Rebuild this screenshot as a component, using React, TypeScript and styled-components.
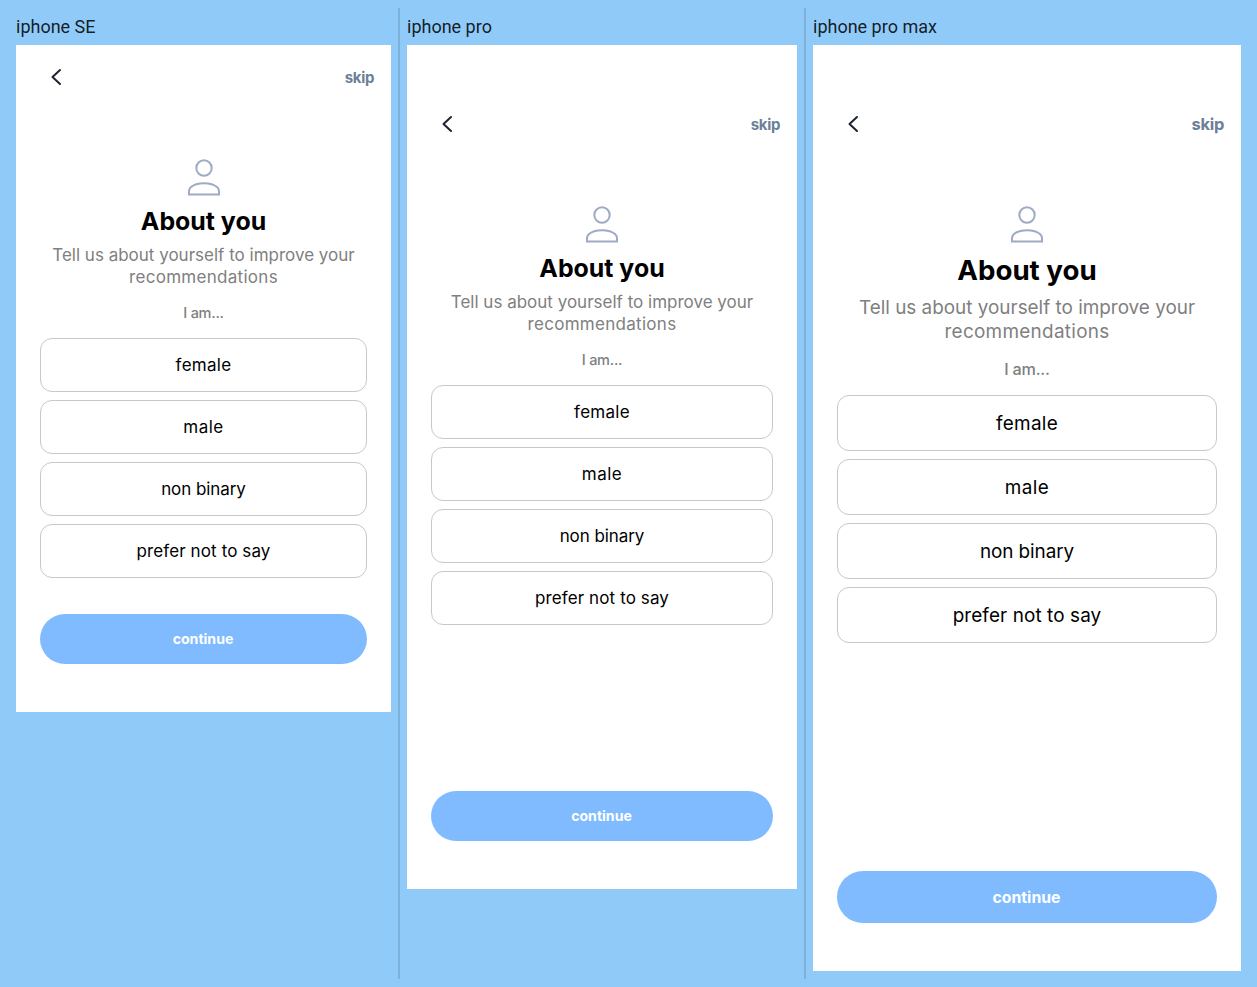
import React from "react";
import styled, { createGlobalStyle, ThemeProvider } from "styled-components";

const GlobalStyle = createGlobalStyle`
  * { box-sizing: border-box; }
  body {
    margin: 0;
    background: #90caf9;
    font-family: Inter, "Liberation Sans", sans-serif;
  }
`;

const Board = styled.main`
  display: flex;
  height: 987px;
  padding: 8px 0 8px 9px;
`;

const Column = styled.section`
  display: flex;
  flex-direction: column;
  flex: none;
  padding: 0 7px;

  & + & {
    border-left: 2px solid rgba(0, 0, 0, 0.12);
  }
`;

const DeviceName = styled.h2`
  margin: 0;
  height: 37px;
  font: 400 18px/37px Roboto, sans-serif;
  color: rgba(0, 0, 0, 0.87);
`;

const Screen = styled.div`
  display: flex;
  flex-direction: column;
  width: ${(p) => p.theme.width}px;
  height: ${(p) => p.theme.height}px;
  padding-top: ${(p) => p.theme.safeTop}px;
  background: #fff;
`;

const Header = styled.header`
  display: flex;
  align-items: center;
  justify-content: space-between;
  height: 64px;
  padding: 0 17px 0 34px;
`;

const BackButton = styled.button`
  display: flex;
  padding: 0;
  border: 0;
  background: none;
`;

const SkipButton = styled.button`
  padding: ${(p) => p.theme.skipTop}px 0 0;
  border: 0;
  background: none;
  color: #6b7f99;
  font: 650 ${(p) => p.theme.skip}px/24px Inter, sans-serif;
  letter-spacing: -0.25px;
  margin-right: -0.25px;
`;

const Body = styled.div`
  display: flex;
  flex: 1;
  flex-direction: column;
  align-items: center;
  padding: 48px 24px;
  text-align: center;
`;

const Title = styled.h1`
  margin: 7px 0 6px;
  font-size: ${(p) => p.theme.title}px;
  line-height: ${(p) => p.theme.titleLine}px;
  font-weight: 700;
  color: #000;
`;

const Lead = styled.p`
  margin: ${(p) => p.theme.nudge}px 0 0;
  font-size: ${(p) => p.theme.text}px;
  line-height: ${(p) => p.theme.textLine}px;
  color: #808080;
`;

const LeadEnd = styled.span`
  display: block;
  letter-spacing: 0.29px;
`;

const Prompt = styled.p`
  margin: ${(p) => p.theme.promptGap - p.theme.nudge}px 0 ${(p) => p.theme.promptGap}px;
  font-size: ${(p) => p.theme.prompt}px;
  line-height: ${(p) => p.theme.promptLine}px;
  font-weight: 450;
  letter-spacing: -0.25px;
  color: #808080;
`;

const Options = styled.div`
  display: flex;
  flex-direction: column;
  gap: 8px;
  width: 100%;
`;

const Option = styled.button<{ $tracking: number }>`
  height: ${(p) => p.theme.option}px;
  padding: ${(p) => p.theme.nudge * 2}px 0 0;
  border: 1px solid #c8c8c8;
  border-radius: 12px;
  background: #fff;
  color: #000;
  font: 400 ${(p) => p.theme.text}px/24px Inter, sans-serif;
  letter-spacing: ${(p) => p.$tracking}px;
`;

const ContinueButton = styled.button`
  width: 100%;
  height: ${(p) => p.theme.action}px;
  margin-top: auto;
  padding: ${(p) => p.theme.nudge * 2}px 1px 0 0;
  border: 0;
  border-radius: 26px;
  background: #80bbff;
  color: #fff;
  font: 700 ${(p) => p.theme.actionText}px/20px Inter, sans-serif;
`;

const regular = {
  skip: 15, skipTop: 1, title: 24.9, titleLine: 34, text: 17, textLine: 22, nudge: 0,
  prompt: 14.5, promptLine: 20, promptGap: 15, option: 54, action: 50, actionText: 14.1,
};

const large = {
  skip: 16.5, skipTop: 0, title: 27.7, titleLine: 38, text: 18.9, textLine: 24, nudge: 1,
  prompt: 16.2, promptLine: 20, promptGap: 16, option: 56, action: 52, actionText: 15.8,
};

const devices = [
  { name: "iphone SE", width: 375, height: 667, safeTop: 0, ...regular },
  { name: "iphone pro", width: 390, height: 844, safeTop: 47, ...regular },
  { name: "iphone pro max", width: 428, height: 926, safeTop: 47, ...large },
];

const options = [
  { label: "female", tracking: 0.28 },
  { label: "male", tracking: 0.45 },
  { label: "non binary", tracking: -0.07 },
  { label: "prefer not to say", tracking: 0.11 },
];

const ChevronIcon = () => (
  <svg width="12" height="20" viewBox="0 0 12 20" fill="none" stroke="#1f2433" strokeWidth="2" strokeLinecap="round" strokeLinejoin="round">
    <path d="M10 3 2.500 10l7.500 7" />
  </svg>
);

const PersonIcon = () => (
  <svg width="36" height="40" viewBox="0 0 36 40" fill="none" stroke="#9eabc3" strokeWidth="2">
    <circle cx="18" cy="11" r="7.700" />
    <path d="M3 37.500v-2.800C3 33 3.400 31.400 4.700 30.200C7.600 27.700 12.600 26.200 18 26.200S28.400 27.700 31.300 30.200C32.600 31.400 33 33 33 34.700v2.800Z" />
  </svg>
);

export default function App() {
  return (
    <>
      <GlobalStyle />
      <Board>
        {devices.map((device) => (
          <ThemeProvider key={device.name} theme={device}>
            <Column>
              <DeviceName>{device.name}</DeviceName>
              <Screen>
                <Header>
                  <BackButton aria-label="Back"><ChevronIcon /></BackButton>
                  <SkipButton>skip</SkipButton>
                </Header>
                <Body>
                  <PersonIcon />
                  <Title>About you</Title>
                  <Lead>
                    Tell us about yourself to improve your <LeadEnd>recommendations</LeadEnd>
                  </Lead>
                  <Prompt>I am...</Prompt>
                  <Options>
                    {options.map((o) => (
                      <Option key={o.label} $tracking={o.tracking}>{o.label}</Option>
                    ))}
                  </Options>
                  <ContinueButton>continue</ContinueButton>
                </Body>
              </Screen>
            </Column>
          </ThemeProvider>
        ))}
      </Board>
    </>
  );
}
